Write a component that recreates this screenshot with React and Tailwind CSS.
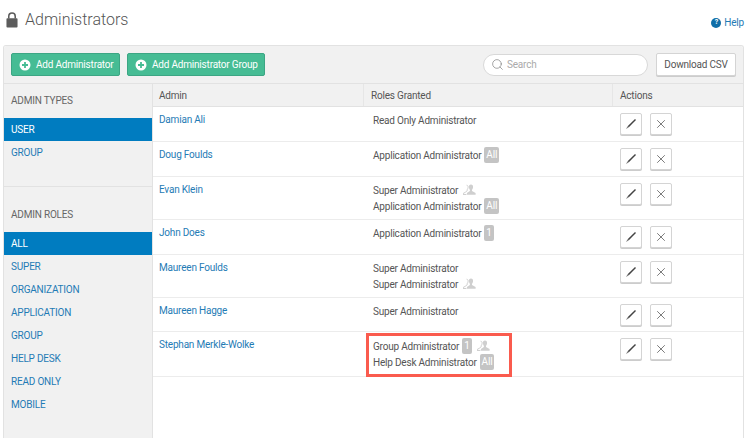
import React from 'react';
import { Search, X } from 'lucide-react';

const font = "font-['Roboto','Liberation_Sans',sans-serif]";

const PlusCircle = () => (
  <svg width="12" height="12" viewBox="0 0 12 12" className="shrink-0">
    <circle cx="6" cy="6" r="5.5" fill="#fff" />
    <path d="M6 3v6M3 6h6" stroke="#46bc94" strokeWidth="1.8" />
  </svg>
);

const Pencil = () => (
  <svg width="14" height="14" viewBox="0 0 14 14">
    <path d="M11 2l1 1-7.200 7.200-1.200-1z" fill="#444" />
    <path d="M3.600 9.200l1.200 1-2.800 1.800z" fill="#777" />
  </svg>
);

const UserGroup = () => (
  <svg width="13" height="12" viewBox="0 0 13 12" className="shrink-0">
    <path d="M3.600 1.200c1 0 1.600.9 1.500 2.100-.1 1-.5 1.900-.9 2.400v1L2.400 8.200 0 9.600v.9h3.400" fill="none" stroke="#cfcfcf" strokeWidth="1" />
    <path d="M8 .5c1.400 0 2.200 1.100 2.100 2.600-.1 1.200-.6 2.300-1.100 2.800v1.200l3.600 2v1.600H3.900V9.100l3-2V5.900c-.5-.6-1-1.600-1.100-2.800C5.700 1.600 6.600.5 8 .5z" fill="#cfcfcf" />
  </svg>
);

const Badge = ({ children }) => (
  <span className="ml-[3px] inline-flex h-[16px] items-center rounded-[2px] bg-[#c4c4c4] px-[2px] text-[10px] leading-none text-white">
    {children}
  </span>
);

const Role = ({ name, badge, group }) => (
  <div className="flex h-[16px] items-center whitespace-nowrap text-[#555]">
    <span>{name}</span>
    {badge && <Badge>{badge}</Badge>}
    {group && <span className="ml-[5px]"><UserGroup /></span>}
  </div>
);

const rows = [
  { name: 'Damian Ali', h: 'h-[35px]', roles: [{ name: 'Read Only Administrator' }] },
  { name: 'Doug Foulds', h: 'h-[35px]', roles: [{ name: 'Application Administrator', badge: 'All' }] },
  { name: 'Evan Klein', h: 'h-[43px]', roles: [{ name: 'Super Administrator', group: true }, { name: 'Application Administrator', badge: 'All' }] },
  { name: 'John Does', h: 'h-[35px]', roles: [{ name: 'Application Administrator', badge: '1' }] },
  { name: 'Maureen Foulds', h: 'h-[43px]', roles: [{ name: 'Super Administrator' }, { name: 'Super Administrator', group: true }] },
  { name: 'Maureen Hagge', h: 'h-[34px]', roles: [{ name: 'Super Administrator' }] },
  { name: 'Stephan Merkle-Wolke', h: 'h-[45px]', highlight: true, roles: [{ name: 'Group Administrator', badge: '1', group: true }, { name: 'Help Desk Administrator', badge: 'All' }] },
];

const SideLink = ({ children, active }) => (
  <div className={`flex h-[23px] items-center pl-[7px] ${active ? 'bg-[#007cc0] text-white' : 'text-[#1f7bb5]'}`}>
    {children}
  </div>
);

const IconButton = ({ children }) => (
  <button className="flex h-[22px] w-[22px] items-center justify-center rounded-[2px] border border-[#d4d4d4] bg-white shadow-[0_1px_0_#ccc]">
    {children}
  </button>
);

const Row = ({ row }) => (
  <div className={`flex ${row.h} border-b border-[#ececec]`}>
    <div className="w-[211px] pl-[6px] pt-[5px] text-[#1f7bb5]">{row.name}</div>
    <div className={`relative w-[249px] pl-[9px] ${row.highlight ? 'pt-[6px]' : 'pt-[5px]'}`}>
      <div className="flex flex-col">
        {row.roles.map((r) => (
          <Role key={r.name + (r.group ? 'g' : '')} {...r} />
        ))}
      </div>
      {row.highlight && (
        <div className="absolute left-[2px] top-[1px] h-[44px] w-[146px] border-[3px] border-[#fa5b4e]" />
      )}
    </div>
    <div className="flex gap-[8px] pl-[7px] pt-[6px]">
      <IconButton><Pencil /></IconButton>
      <IconButton><X size={14} strokeWidth={1.2} color="#444" /></IconButton>
    </div>
  </div>
);

export default function App() {
  return (
    <div className={`${font} h-[438px] w-[750px] overflow-hidden bg-white text-[10px] tracking-[-0.2px]`}>
      <div className="flex h-[45px] items-start justify-between pl-[6px] pr-[6px]">
        <div className="flex items-center gap-[7px] pt-[8px]">
          <svg width="12" height="16" viewBox="0 0 13 17" className="shrink-0">
            <path d="M3 7V4.500a3.500 3.500 0 017 0V7" fill="none" stroke="#5c5c5c" strokeWidth="1.700" />
            <rect x="0.500" y="6.500" width="12" height="10" rx="1" fill="#5c5c5c" />
          </svg>
          <h1 className="text-[16px] leading-[24px] font-light tracking-normal text-[#555]">Administrators</h1>
        </div>
        <div className="flex items-center gap-[3px] pt-[15px] text-[#1f7bb5]">
          <span className="flex h-[10px] w-[10px] items-center justify-center rounded-full bg-[#0f6ea8] text-[7px] leading-none font-bold text-white">?</span>
          <span>Help</span>
        </div>
      </div>

      <div className="ml-[3px] h-[393px] w-[741px] overflow-hidden rounded-t-[3px] border-x border-t border-[#e2e2e2]">
        <div className="flex h-[38px] items-center justify-between border-b border-[#e2e2e2] bg-[#f1f1f1] pl-[7px] pr-[7px]">
          <div className="flex gap-[7px]">
            <button className="flex h-[23px] w-[109px] items-center gap-[5px] rounded-[2px] border border-[#3ca684] bg-[#46bc94] pl-[7px] text-white">
              <PlusCircle />Add Administrator
            </button>
            <button className="flex h-[23px] w-[138px] items-center gap-[5px] rounded-[2px] border border-[#3ca684] bg-[#46bc94] pl-[7px] text-white">
              <PlusCircle />Add Administrator Group
            </button>
          </div>
          <div className="flex items-center gap-[8px]">
            <div className="flex h-[22px] w-[165px] items-center gap-[3px] rounded-full border border-[#d8d8d8] bg-white pl-[7px] text-[#aaa]">
              <Search size={13} strokeWidth={1.2} color="#777" />
              <span>Search</span>
            </div>
            <button className="flex h-[23px] w-[80px] items-center justify-center rounded-[2px] border border-[#d4d4d4] bg-white text-[#555] shadow-[0_1px_0_#ccc]">
              Download CSV
            </button>
          </div>
        </div>

        <div className="flex h-[355px]">
          <aside className="w-[149px] shrink-0 border-r border-[#e2e2e2] bg-[#f1f1f1]">
            <div className="flex h-[34px] items-center pb-[2px] pl-[7px] text-[#666]">ADMIN TYPES</div>
            <SideLink active>USER</SideLink>
            <SideLink>GROUP</SideLink>
            <div className="mt-[22px] border-t border-[#e2e2e2]" />
            <div className="flex h-[45px] items-end pb-[10px] pl-[7px] text-[#666]">ADMIN ROLES</div>
            <SideLink active>ALL</SideLink>
            {['SUPER', 'ORGANIZATION', 'APPLICATION', 'GROUP', 'HELP DESK', 'READ ONLY', 'MOBILE'].map((t) => (
              <SideLink key={t}>{t}</SideLink>
            ))}
          </aside>

          <div className="flex-1 bg-white">
            <div className="flex h-[23px] items-center border-b border-[#e2e2e2] bg-[#f1f1f1] text-[#555]">
              <div className="flex h-full w-[211px] items-center border-r border-[#e6e6e6] pl-[6px]">Admin</div>
              <div className="flex h-full w-[249px] items-center border-r border-[#e6e6e6] pl-[7px]">Roles Granted</div>
              <div className="pl-[7px]">Actions</div>
            </div>
            {rows.map((row) => (
              <Row key={row.name} row={row} />
            ))}
          </div>
        </div>
      </div>
    </div>
  );
}
